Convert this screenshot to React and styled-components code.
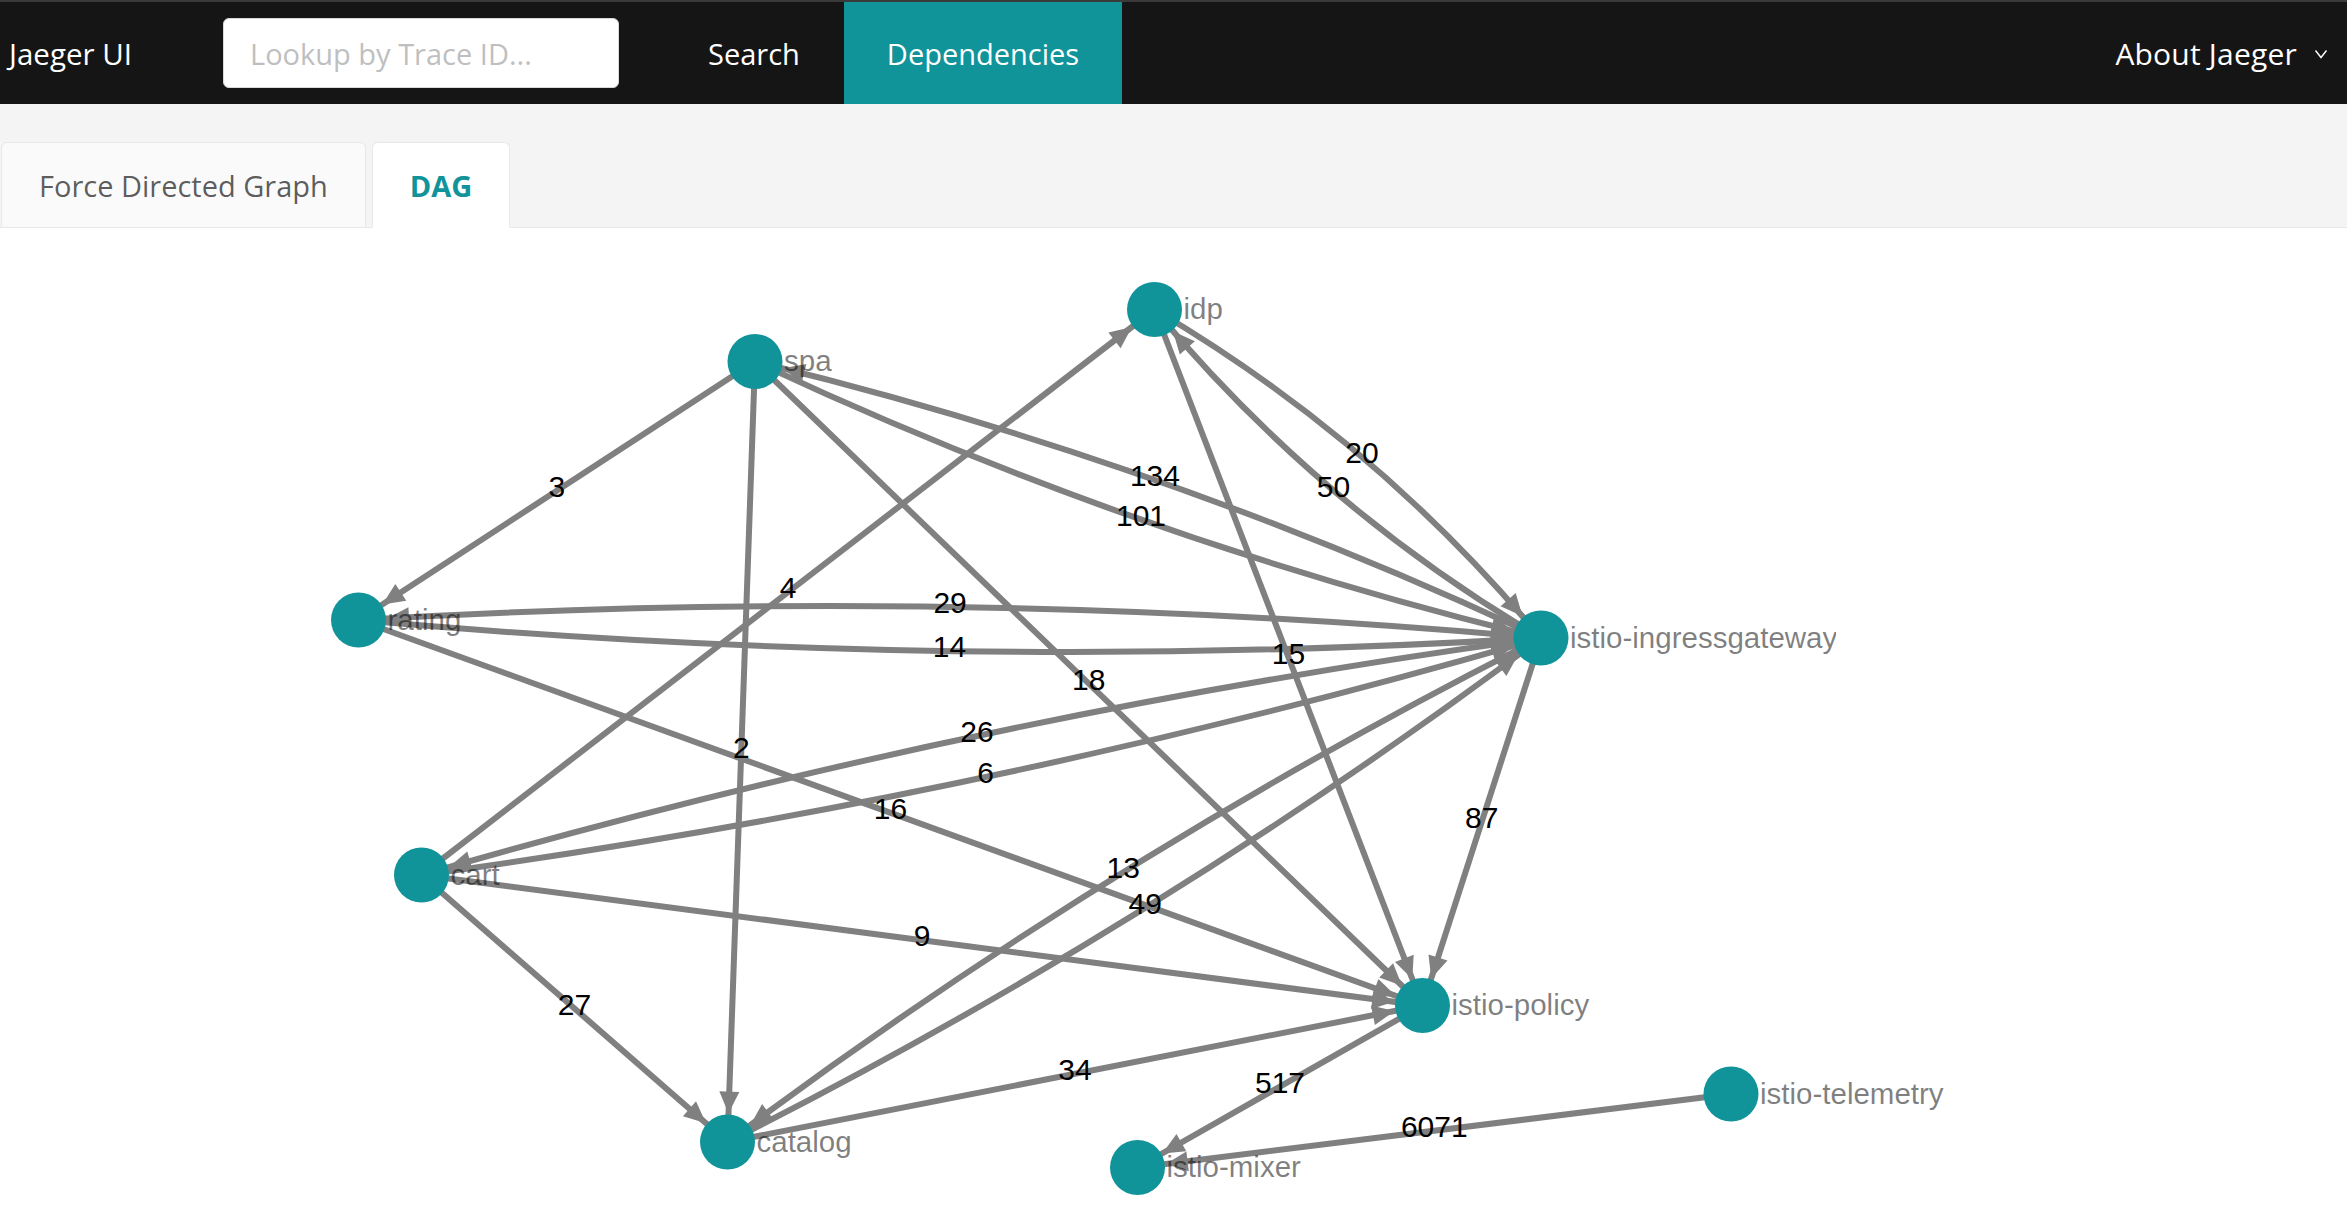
import React from 'react'
import styled, { createGlobalStyle } from 'styled-components'

const GlobalStyle = createGlobalStyle`
  html, body {
    margin: 0;
    padding: 0;
    background: #fff;
  }
  body {
    font-family: "Open Sans", "Noto Sans", sans-serif;
  }
`

const Page = styled.div`
  height: 100vh;
  display: flex;
  flex-direction: column;
  overflow: hidden;
`

const Nav = styled.header`
  height: 104px;
  box-sizing: border-box;
  border-top: 2px solid #3a3a3a;
  background: #151515;
  display: flex;
  align-items: stretch;
  font-size: 29px;
  color: #fff;
`

const Brand = styled.div`
  width: 223px;
  box-sizing: border-box;
  padding-left: 9px;
  display: flex;
  align-items: center;
  font-size: 29.5px;
`

const SearchWrap = styled.div`
  display: flex;
  align-items: center;
  margin-right: 45px;
`

const SearchInput = styled.input`
  width: 396px;
  height: 70px;
  box-sizing: border-box;
  border: 1px solid #d9d9d9;
  border-radius: 6px;
  padding: 0 26px;
  font-family: "Open Sans", sans-serif;
  font-size: 29px;
  color: #333;
  outline: none;
  &::placeholder {
    color: #bfbfbf;
  }
`

const MenuItem = styled.div`
  padding: 0 ${p => p.$pad || 45}px;
  display: flex;
  align-items: center;
  background: ${p => (p.$active ? '#11939a' : 'transparent')};
`

const RightMenu = styled.div`
  margin-left: auto;
  padding-right: 19px;
  display: flex;
  align-items: center;
  gap: 17px;
  font-size: 30px;
  letter-spacing: 0.2px;
`

const Chevron = styled.svg`
  width: 14px;
  height: 12px;
  margin-top: 2px;
`

const TabBar = styled.div`
  height: 124px;
  box-sizing: border-box;
  background: #f4f4f4;
  border-bottom: 1px solid #e8e8e8;
  display: flex;
  align-items: flex-end;
  padding-left: 1px;
  gap: 6px;
`

const Tab = styled.div`
  height: 86px;
  margin-bottom: -1px;
  box-sizing: border-box;
  padding: 0 37px;
  display: flex;
  align-items: center;
  border: 1px solid #e8e8e8;
  border-bottom-color: ${p => (p.$active ? '#fff' : '#e8e8e8')};
  border-radius: 6px 6px 0 0;
  background: ${p => (p.$active ? '#fff' : '#fafafa')};
  color: ${p => (p.$active ? '#11939a' : 'rgba(0, 0, 0, 0.65)')};
  font-weight: ${p => (p.$active ? 700 : 400)};
  font-size: 29px;
`

const GraphArea = styled.div`
  flex: 1;
  position: relative;
  overflow: hidden;
`

const GraphSvg = styled.svg`
  display: block;
  width: 100%;
  height: 100%;
`

const EdgeLine = styled.path`
  fill: none;
  stroke: #808080;
  stroke-width: 6;
`

const ArrowHead = styled.polygon`
  fill: #808080;
`

const EdgeLabel = styled.text`
  font-family: "Liberation Sans", Arial, sans-serif;
  font-size: 30px;
  fill: #000;
  text-anchor: middle;
`

const NodeDot = styled.circle`
  fill: #11939a;
`

const NodeLabel = styled.text`
  font-family: "Liberation Sans", Arial, sans-serif;
  font-size: 29.5px;
  fill: #000;
  fill-opacity: 0.5;
`

const R = 27.5

const NODES = {
  idp: { x: 1154.5, y: 309.5, label: 'idp' },
  spa: { x: 755, y: 361.5, label: 'spa' },
  rating: { x: 358.5, y: 620, label: 'rating' },
  ingress: { x: 1541, y: 638, label: 'istio-ingressgateway', clip: true },
  cart: { x: 421.5, y: 875, label: 'cart' },
  policy: { x: 1422.5, y: 1005.5, label: 'istio-policy' },
  catalog: { x: 727.5, y: 1142, label: 'catalog' },
  mixer: { x: 1137.5, y: 1167.5, label: 'istio-mixer' },
  telemetry: { x: 1731, y: 1094, label: 'istio-telemetry' },
}

const EDGES = [
  ['spa', 'rating', '3', 0],
  ['spa', 'catalog', '2', 0],
  ['spa', 'policy', '18', 0],
  ['ingress', 'spa', '134', 42],
  ['spa', 'ingress', '101', 42],
  ['ingress', 'idp', '50', -44],
  ['idp', 'ingress', '20', -44],
  ['idp', 'policy', '15', 0],
  ['ingress', 'rating', '29', 44],
  ['rating', 'ingress', '14', 44],
  ['rating', 'policy', '16', 0],
  ['cart', 'idp', '4', 0],
  ['ingress', 'cart', '26', 42],
  ['cart', 'ingress', '6', 42],
  ['cart', 'policy', '9', 0],
  ['cart', 'catalog', '27', 0],
  ['ingress', 'catalog', '13', 42],
  ['catalog', 'ingress', '49', 42],
  ['catalog', 'policy', '34', 0],
  ['ingress', 'policy', '87', 0],
  ['policy', 'mixer', '517', 0],
  ['telemetry', 'mixer', '6071', 0],
]

const bez = (a, c, b, t) => ({
  x: (1 - t) * (1 - t) * a.x + 2 * (1 - t) * t * c.x + t * t * b.x,
  y: (1 - t) * (1 - t) * a.y + 2 * (1 - t) * t * c.y + t * t * b.y,
})

// quadratic edge from centre to centre, arrow tip where it meets the target circle
function layoutEdge([s, t, label, bend]) {
  const a = NODES[s]
  const b = NODES[t]
  const dx = b.x - a.x
  const dy = b.y - a.y
  const len = Math.hypot(dx, dy)
  const nx = -dy / len
  const ny = dx / len
  const c = { x: (a.x + b.x) / 2 + nx * bend, y: (a.y + b.y) / 2 + ny * bend }

  let lo = 0.5
  let hi = 1
  for (let i = 0; i < 40; i++) {
    const m = (lo + hi) / 2
    const p = bez(a, c, b, m)
    if (Math.hypot(p.x - b.x, p.y - b.y) > R + 1) lo = m
    else hi = m
  }
  const tip = bez(a, c, b, lo)
  const tx = 2 * (1 - lo) * (c.x - a.x) + 2 * lo * (b.x - c.x)
  const ty = 2 * (1 - lo) * (c.y - a.y) + 2 * lo * (b.y - c.y)
  const tl = Math.hypot(tx, ty)
  const ux = tx / tl
  const uy = ty / tl
  const L = 22
  const W = 10
  const bx = tip.x - ux * L
  const by = tip.y - uy * L
  const arrow = [
    [tip.x, tip.y],
    [bx - uy * W, by + ux * W],
    [bx + uy * W, by - ux * W],
  ]
    .map(p => p.map(v => v.toFixed(1)).join(','))
    .join(' ')

  const mid = bez(a, c, b, 0.5)
  return {
    key: `${s}-${t}`,
    d: `M${a.x} ${a.y} Q${c.x.toFixed(1)} ${c.y.toFixed(1)} ${b.x} ${b.y}`,
    arrow,
    label,
    lx: mid.x,
    ly: mid.y + 6,
  }
}

const Graph = () => {
  const edges = EDGES.map(layoutEdge)
  return (
    <GraphSvg viewBox="0 228 2347 992" preserveAspectRatio="xMinYMin meet">
      <defs>
        <clipPath id="label-clip">
          <rect x="0" y="228" width="1836" height="992" />
        </clipPath>
      </defs>
      {edges.map(e => (
        <g key={e.key}>
          <EdgeLine d={e.d} />
          <ArrowHead points={e.arrow} />
        </g>
      ))}
      {edges.map(e => (
        <EdgeLabel key={e.key + '-l'} x={e.lx} y={e.ly}>
          {e.label}
        </EdgeLabel>
      ))}
      {Object.entries(NODES).map(([id, n]) => (
        <NodeDot key={id} cx={n.x} cy={n.y} r={R} />
      ))}
      {Object.entries(NODES).map(([id, n]) => (
        <NodeLabel
          key={id + '-l'}
          x={n.x + 29}
          y={n.y + 9.5}
          clipPath={n.clip ? 'url(#label-clip)' : undefined}
        >
          {n.label}
        </NodeLabel>
      ))}
    </GraphSvg>
  )
}

const App = () => {
  return (
    <Page>
      <GlobalStyle />
      <Nav>
        <Brand>Jaeger UI</Brand>
        <SearchWrap>
          <SearchInput placeholder="Lookup by Trace ID..." />
        </SearchWrap>
        <MenuItem $pad={44}>Search</MenuItem>
        <MenuItem $active $pad={43}>Dependencies</MenuItem>
        <RightMenu>
          About Jaeger
          <Chevron viewBox="0 0 14 12">
            <path d="M1.5 2.5 L7 9.5 L12.5 2.5" fill="none" stroke="#fff" strokeWidth="1.4" />
          </Chevron>
        </RightMenu>
      </Nav>
      <TabBar>
        <Tab>Force Directed Graph</Tab>
        <Tab $active>DAG</Tab>
      </TabBar>
      <GraphArea>
        <Graph />
      </GraphArea>
    </Page>
  )
}

export default App
